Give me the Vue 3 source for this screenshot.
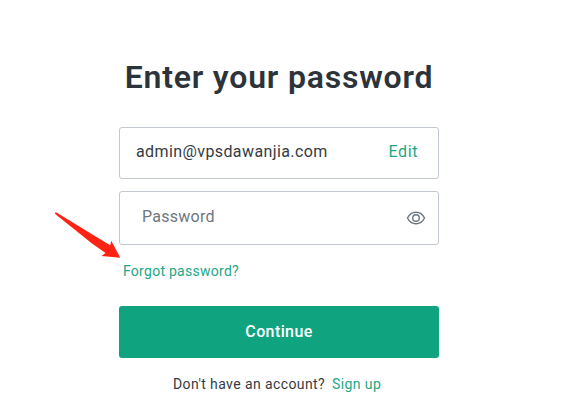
<script setup>
import { ref } from 'vue'

const email = 'admin@vpsdawanjia.com'
const password = ref('')
const showPassword = ref(false)
</script>

<template>
  <main class="page">
    <h1 class="title">Enter your password</h1>

    <form class="form" @submit.prevent>
      <div class="field email-field">
        <span class="email">{{ email }}</span>
        <a class="link edit">Edit</a>
      </div>

      <div class="field password-field">
        <input
          v-model="password"
          class="password"
          :type="showPassword ? 'text' : 'password'"
          placeholder="Password"
        >
        <button type="button" class="toggle" @click="showPassword = !showPassword">
          <svg width="20" height="16" viewBox="0 0 20 16" fill="none" stroke="#6e7780" stroke-width="1.4">
            <path d="M1.500 8C3.200 4.400 6.300 2.200 10 2.200S16.800 4.400 18.500 8C16.800 11.600 13.700 13.800 10 13.800S3.200 11.600 1.500 8Z" />
            <circle cx="10" cy="8" r="3.300" />
          </svg>
        </button>
      </div>

      <a class="link forgot">Forgot password?</a>

      <button type="submit" class="submit">Continue</button>
    </form>

    <p class="signup">
      <span class="question">Don't have an account?</span>
      <a class="link signup-link">Sign up</a>
    </p>

    <svg class="arrow" width="68" height="48" viewBox="0 0 68 48">
      <path d="M1 .6H2.500L38 22.300 56.200 33.200 57.300 28.800 66.300 45.800 47.500 44 51.500 41 38 31.500 1.200 2Z" fill="#ff2314" />
    </svg>
  </main>
</template>

<style>
body {
  background: #fff;
}
</style>

<style scoped>
.page {
  position: relative;
  box-sizing: border-box;
  width: 563px;
  height: 416px;
  padding: 57px 124px 0 119px;
  overflow: hidden;
  font-family: Roboto, sans-serif;
  font-weight: 400;
  color: #353b42;
}

.title {
  margin: 0 0 30px;
  color: #2d333a;
  font-size: 32px;
  font-weight: 600;
  line-height: 40px;
  letter-spacing: 0.8px;
  text-align: center;
  white-space: nowrap;
}

.form {
  display: flex;
  flex-direction: column;
}

.field {
  display: flex;
  align-items: center;
  justify-content: space-between;
  box-sizing: border-box;
  border: 1px solid #c2c8d0;
  border-radius: 3px;
  font-size: 16px;
}

.link {
  color: #1ba785;
  cursor: pointer;
}

.email-field {
  height: 52px;
  padding: 0 20px 3px 16px;
}

.email {
  letter-spacing: 0.4px;
}

.edit {
  letter-spacing: 0.6px;
}

.password-field {
  height: 54px;
  margin-top: 12px;
  padding: 0 12px 0 22px;
}

.password {
  width: 200px;
  padding: 0 0 3px;
  border: none;
  outline: none;
  background: none;
  font: inherit;
  letter-spacing: 0.25px;
}

.password::placeholder {
  color: #6e7780;
}

.toggle {
  display: flex;
  padding: 0;
  border: none;
  background: none;
  cursor: pointer;
}

.forgot {
  align-self: flex-start;
  margin: 16px 0 0 4px;
  font-size: 14px;
  line-height: 20px;
  letter-spacing: 0.27px;
}

.submit {
  height: 52px;
  margin-top: 25px;
  padding: 0 0 2px;
  border: none;
  border-radius: 3px;
  background: #10a37f;
  color: #fff;
  font: 500 16px Roboto, sans-serif;
  letter-spacing: 0.4px;
  cursor: pointer;
}

.signup {
  display: flex;
  gap: 7px;
  margin: 16px 0 0 54px;
  font-size: 14px;
  line-height: 20px;
  letter-spacing: 0.4px;
  white-space: nowrap;
}

/* pointer to the reset link */
.arrow {
  position: absolute;
  left: 54px;
  top: 212px;
}
</style>
